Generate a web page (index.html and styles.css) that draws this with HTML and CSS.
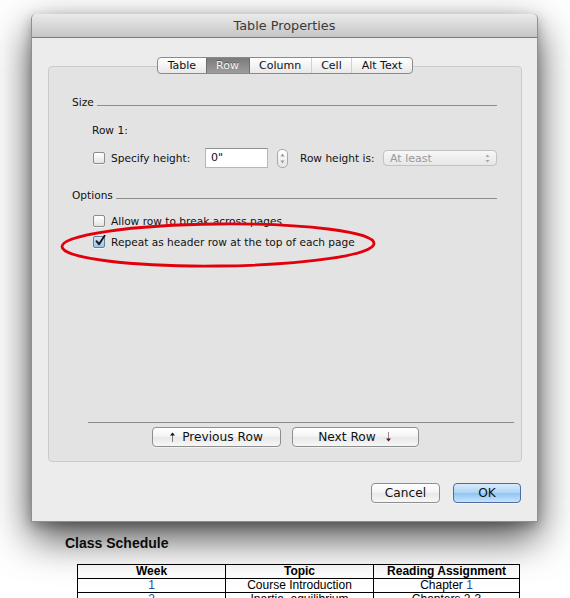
FILE: index.html
```html
<!DOCTYPE html>
<html lang="en">
<head>
  <meta charset="UTF-8">
  <title>Table Properties</title>
  <link rel="stylesheet" href="styles.css">
</head>
<body>

  <div class="page">
    <!-- Dialog -->
    <div class="dialog">
      <div class="titlebar">Table Properties</div>
      <div class="dialog-body">
        <div class="tabs">
          <span class="tab">Table</span>
          <span class="tab active">Row</span>
          <span class="tab">Column</span>
          <span class="tab">Cell</span>
          <span class="tab">Alt Text</span>
        </div>

        <div class="pane">
          <div class="fields">
            <div class="group-title"><span>Size</span></div>
            <div class="sub">Row 1:</div>
            <div class="height-row">
              <label class="check"><span class="box"></span>Specify height:</label>
              <div class="text-input">0"</div>
              <div class="stepper">
                <svg width="5" height="11" viewBox="0 0 5 11"><path d="M0.5 3.5 L2.5 0.5 L4.5 3.5Z M0.5 7.5 L2.5 10.5 L4.5 7.5Z" fill="#9a9a9a"/></svg>
              </div>
              <span class="lbl">Row height is:</span>
              <div class="select">
                <span>At least</span>
                <svg width="5" height="9" viewBox="0 0 5 9"><path d="M0.5 3 L2.5 0.5 L4.5 3Z M0.5 6 L2.5 8.5 L4.5 6Z" fill="#a5a5a5"/></svg>
              </div>
            </div>

            <div class="group-title options"><span>Options</span></div>
            <label class="check option-row first"><span class="box"></span>Allow row to break across pages</label>
            <label class="check option-row"><span class="box checked">
              <svg width="12" height="12" viewBox="0 0 12 12"><path d="M2.5 6.2 L5 9.2 L10.6 0.8" fill="none" stroke="#111" stroke-width="1.8" stroke-linecap="round" stroke-linejoin="round"/></svg>
            </span>Repeat as header row at the top of each page</label>
          </div>

          <div class="pane-nav">
            <div class="rule"></div>
            <div class="nav-buttons">
              <div class="btn prev">
                <svg width="7" height="10" viewBox="0 0 7 10"><path d="M3.5 9.5 V3" stroke="#111" stroke-width="1" stroke-dasharray="1 1"/><path d="M1 3.5 L3.5 0.5 L6 3.5Z" fill="#111"/></svg>
                Previous Row
              </div>
              <div class="btn next">
                Next Row
                <svg width="7" height="10" viewBox="0 0 7 10"><path d="M3.5 0.5 V7" stroke="#4a1a1a" stroke-width="1" stroke-dasharray="1 1"/><path d="M1 6.5 L3.5 9.5 L6 6.5Z" fill="#4a1a1a"/></svg>
              </div>
            </div>
          </div>
        </div>

        <div class="actions">
          <div class="btn cancel">Cancel</div>
          <div class="btn ok">OK</div>
        </div>
      </div>
    </div>

    <!-- Document behind the dialog -->
    <h3 class="doc-title">Class Schedule</h3>
    <table class="schedule">
      <colgroup><col class="c1"><col class="c2"><col class="c3"></colgroup>
      <tr><th>Week</th><th>Topic</th><th>Reading Assignment</th></tr>
      <tr><td class="num">1</td><td>Course Introduction</td><td>Chapter <span class="num">1</span></td></tr>
      <tr><td class="num">2</td><td>Inertia, equilibrium</td><td>Chapters 2-3</td></tr>
    </table>
  </div>

  <!-- Red annotation ring -->
  <svg class="annotation" width="322" height="48" viewBox="0 0 322 48">
    <ellipse cx="160" cy="24" rx="156" ry="21" fill="none" stroke="#e2000c" stroke-width="2.8" transform="rotate(-0.6 160 24)"/>
  </svg>

</body>
</html>
```

FILE: styles.css
```css
/* RESET & BASE */
* {
  margin: 0;
  padding: 0;
  box-sizing: border-box;
}
body {
  background: #fff;
  font-family: "DejaVu Sans", sans-serif;
  color: #111;
}
.page {
  padding-top: 14px;
}

/* DIALOG */
.dialog {
  position: relative;
  z-index: 1;
  width: 507px;
  margin-left: 31px;
  background: #ececec;
  border: 1px solid #8f8f8f;
  border-top: none;
  border-radius: 5px 5px 0 0;
  box-shadow: 0 16px 40px rgba(0,0,0,0.7), 0 4px 12px rgba(0,0,0,0.25);
}
.titlebar {
  height: 24px;
  line-height: 23px;
  text-align: center;
  font-size: 12.8px;
  color: #3a3a3a;
  background: linear-gradient(#ebebeb, #c5c5c5);
  border-bottom: 1px solid #7b7b7b;
  border-radius: 5px 5px 0 0;
}
.dialog-body {
  display: flex;
  flex-direction: column;
  padding: 19px 15px 0 16px;
}

/* TABS */
.tabs {
  align-self: center;
  position: relative;
  z-index: 1;
  display: flex;
  height: 17px;
  border: 1px solid #8a8a8a;
  border-radius: 4px;
  background: linear-gradient(#fff, #e8e8e8);
  font-size: 11px;
  overflow: hidden;
}
.tab {
  padding: 0 9.5px;
  line-height: 15px;
  border-left: 1px solid #d0d0d0;
}
.tab:first-child { border-left: none; }
.tab.active {
  background: linear-gradient(#7a7a7a, #9d9d9d);
  color: #f6f6f6;
  text-shadow: 0 -1px 0 #555;
  border-left-color: #6f6f6f;
}
.tab.active + .tab { border-left-color: #6f6f6f; }

/* PANE */
.pane {
  margin-top: -8px;
  height: 396px;
  display: flex;
  flex-direction: column;
  background: #e3e3e3;
  border: 1px solid #cbcbcb;
  border-radius: 4px;
  font-size: 10.6px;
}
.fields {
  padding: 27px 24px 0 23px;
}
.group-title {
  display: flex;
  align-items: center;
  height: 16px;
}
.group-title::after {
  content: "";
  flex: 1;
  border-top: 1px solid #8d8d8d;
  margin: 6px 0 0 3px;
}
.options { margin-top: 19px; }
.sub {
  height: 16px;
  line-height: 16px;
  margin: 12px 0 0 20px;
}
.height-row {
  display: flex;
  align-items: center;
  height: 20px;
  margin: 10px 0 0 21px;
}
.check {
  display: flex;
  align-items: center;
  gap: 6px;
  height: 16px;
}
.height-row .check { width: 112px; }
.option-row { margin: 5px 0 0 21px; }
.option-row.first { margin-top: 10px; }
.box {
  flex: 0 0 12px;
  height: 12px;
  border: 1px solid #8c8c8c;
  border-radius: 2px;
  background: linear-gradient(#fff, #e4e4e4);
  box-shadow: 0 1px 0 rgba(255,255,255,0.6);
  position: relative;
}
.box.checked {
  background: linear-gradient(#d4e6f8, #9cc3ea);
  border-color: #6a7d96;
}
.box.checked svg {
  position: absolute;
  left: 0;
  top: -2px;
}
.text-input {
  width: 63px;
  height: 20px;
  padding-left: 5px;
  line-height: 18px;
  font-size: 11px;
  background: #fff;
  border: 1px solid #b7b7b7;
  border-top-color: #8f8f8f;
}
.stepper {
  width: 11px;
  height: 19px;
  margin-left: 9px;
  display: flex;
  align-items: center;
  justify-content: center;
  border: 1px solid #a9a9a9;
  border-radius: 5px;
  background: linear-gradient(#fff, #e6e6e6);
}
.lbl {
  width: 83px;
  margin-left: 12px;
}
.select {
  width: 114px;
  height: 16px;
  display: flex;
  align-items: center;
  justify-content: space-between;
  padding: 0 6px;
  color: #999;
  border: 1px solid #c3c3c3;
  border-radius: 4px;
  background: linear-gradient(#f7f7f7, #e7e7e7);
  font-size: 11px;
}

/* PANE NAVIGATION */
.pane-nav {
  margin-top: auto;
  padding-bottom: 14px;
}
.rule {
  height: 1px;
  background: #8b8b8b;
  margin: 0 7px 0 39px;
}
.nav-buttons {
  display: flex;
  justify-content: center;
  gap: 11px;
  margin-top: 4px;
}
.btn {
  height: 20px;
  display: flex;
  align-items: center;
  justify-content: center;
  gap: 6px;
  font-size: 12.2px;
  color: #111;
  border: 1px solid #8e8e8e;
  border-radius: 4px;
  background: linear-gradient(#fff, #f3f3f3 50%, #e8e8e8 51%, #f7f7f7);
  box-shadow: 0 1px 0 rgba(255,255,255,0.5);
}
.prev { width: 129px; }
.next { width: 127px; gap: 9px; }

/* DIALOG ACTIONS */
.actions {
  display: flex;
  justify-content: flex-end;
  gap: 13px;
  padding: 21px 0 18px;
  margin-right: 1px;
}
.cancel { width: 69px; }
.ok {
  width: 68px;
  border-color: #4e6c9f;
  background: linear-gradient(#d9ebfb, #acd3f6 50%, #8ec4f2 51%, #c6e4fc);
}

/* DOCUMENT */
.doc-title {
  margin: 13px 0 0 65px;
  font: bold 14px/16px "Liberation Sans", Arial, sans-serif;
  color: #111;
}
.schedule {
  margin: 13px 0 0 77px;
  width: 443px;
  table-layout: fixed;
  border-collapse: collapse;
  font: 12px/13px "Liberation Sans", Arial, sans-serif;
  color: #000;
}
.schedule .c1 { width: 148px; }
.schedule .c2 { width: 148px; }
.schedule th,
.schedule td {
  border: 1px solid #000;
  padding: 0;
  text-align: center;
}
.num { color: #1d4fa6; }

/* ANNOTATION */
.annotation {
  position: absolute;
  left: 58px;
  top: 221px;
  z-index: 2;
  pointer-events: none;
}
```
